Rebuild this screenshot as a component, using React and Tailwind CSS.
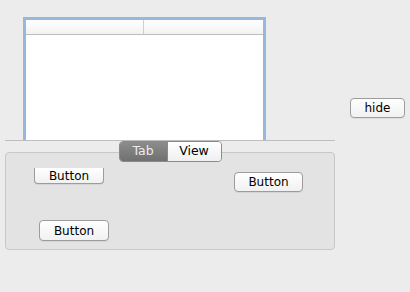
import React from 'react';

function MacButton({ className = '', children }) {
  return (
    <div
      className={`flex items-center justify-center rounded-[4px] border border-[#9c9c9c] bg-gradient-to-b from-white to-[#f1f1f1] text-[12px] leading-none text-black shadow-[0_1px_0_rgba(0,0,0,0.06)] ${className}`}
    >
      {children}
    </div>
  );
}

export default function App() {
  return (
    <div
      className="flex w-[410px] h-[292px] overflow-hidden bg-[#ececec]"
      style={{ fontFamily: '"DejaVu Sans", "Liberation Sans", sans-serif' }}
    >
      {/* left column: table + tab view */}
      <div className="w-[340px] pt-[17px]">
        {/* table with focus ring */}
        <div className="ml-[23px] w-[243px] h-[123px] border-[3px] border-b-0 border-[#98b7dd] bg-white">
          <div className="flex h-[15px] border-b border-[#bdbdbd] bg-gradient-to-b from-white to-[#f2f2f2]">
            <div className="w-[118px] border-r border-[#cfcfcf]"></div>
            <div className="flex-1"></div>
          </div>
        </div>

        {/* separator */}
        <div className="ml-[5px] w-[330px] h-px bg-[#bdbdbd]"></div>

        {/* segmented control */}
        <div className="relative z-10 flex justify-center ml-[5px] w-[330px]">
          <div className="flex h-[21px] rounded-[4px] border border-[#8a8a8a] overflow-hidden text-[12.5px] leading-none">
            <div className="flex w-[47px] items-center justify-center bg-gradient-to-b from-[#8c8c8c] to-[#707070] text-[#ececec]">
              Tab
            </div>
            <div className="flex w-[54px] items-center justify-center border-l border-[#8a8a8a] bg-gradient-to-b from-white to-[#f0f0f0] text-black">
              View
            </div>
          </div>
        </div>

        {/* tab panel */}
        <div className="-mt-[10px] ml-[5px] w-[330px] h-[98px] rounded-[4px] border border-[#c8c8c8] bg-[#e3e3e3]">
          <div className="flex items-start">
            <MacButton className="ml-[28px] mt-[15px] w-[70px] h-[16px] border-t-0 rounded-t-none">
              Button
            </MacButton>
            <MacButton className="ml-[130px] mt-[19px] w-[69px] h-[20px]">Button</MacButton>
          </div>
          <MacButton className="ml-[33px] mt-[28px] w-[70px] h-[21px]">Button</MacButton>
        </div>
      </div>

      {/* right column */}
      <div className="flex-1 pt-[98px] pl-[10px]">
        <MacButton className="w-[55px] h-[20px]">hide</MacButton>
      </div>
    </div>
  );
}
